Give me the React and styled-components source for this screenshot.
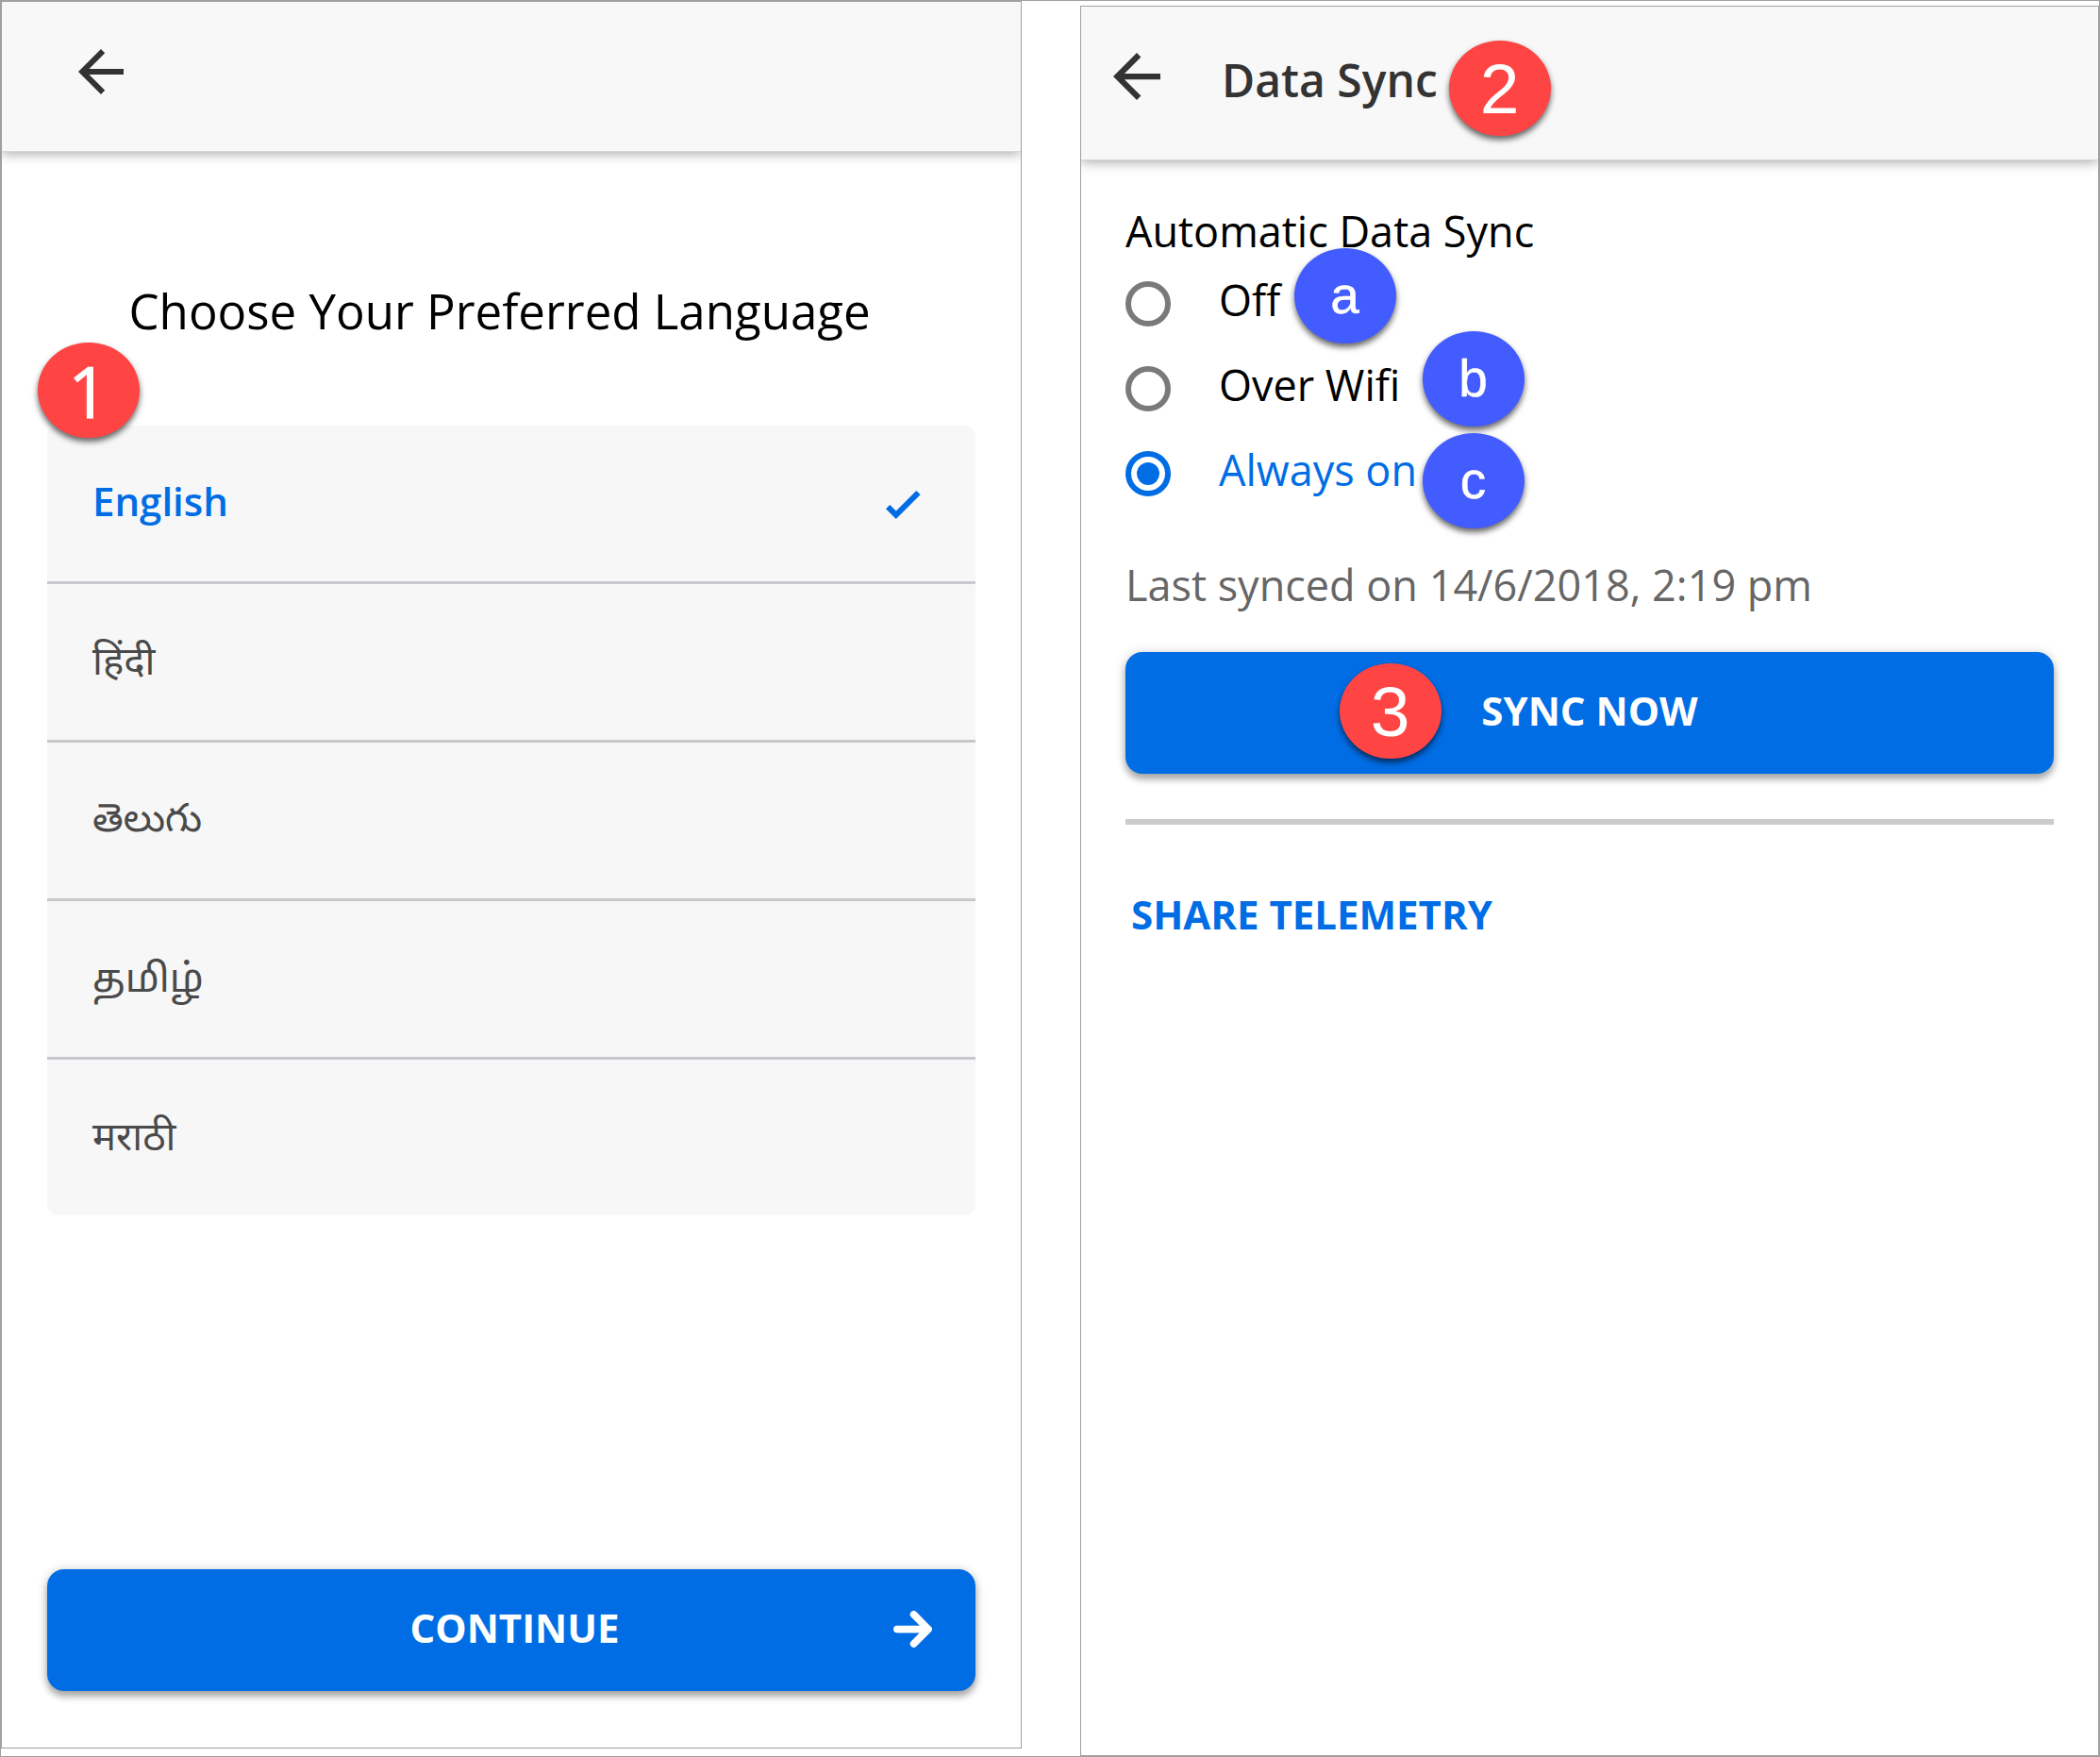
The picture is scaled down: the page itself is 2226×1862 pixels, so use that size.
import React, { useState } from "react";
import styled, { createGlobalStyle } from "styled-components";

const BLUE = "#006de5";
const FRAME = "#a0a0a0";

const GlobalStyle = createGlobalStyle`
  *, *::before, *::after { box-sizing: border-box; }
  body { margin: 0; background: #fff; }
  button { font: inherit; margin: 0; border: 0; padding: 0; background: none; cursor: pointer; }
`;

const Board = styled.main`
  position: relative;
  display: flex;
  justify-content: space-between;
  width: 2226px;
  height: 1862px;
  border: 1px solid ${FRAME};
  background: #fff;
  font-family: "Open Sans", "Noto Sans", sans-serif;
  color: #000;
`;

const Screen = styled.section`
  display: flex;
  flex-direction: column;
  width: ${(p) => p.$width}px;
  height: ${(p) => p.$height}px;
  margin-top: ${(p) => p.$top || 0}px;
  border: 1px solid ${FRAME};
  background: #fff;
`;

const Header = styled.header`
  display: flex;
  flex: none;
  align-items: flex-start;
  height: ${(p) => p.$height}px;
  padding: ${(p) => p.$pad};
  background: #f8f8f8;
  box-shadow: 0 1px 0 #d6d6d6, 0 3px 12px rgba(0, 0, 0, 0.34);
  clip-path: inset(0 0 -20px 0);
`;

const BackButton = styled.button`
  display: flex;
  flex: none;
`;

const HeaderTitle = styled.h1`
  margin: -4px 0 0 65px;
  font-size: 48px;
  line-height: 66px;
  font-weight: 600;
  color: #333;
`;

const LanguageBody = styled.div`
  display: flex;
  flex: 1;
  flex-direction: column;
  padding: 134px 48px 60px;
`;

const Prompt = styled.h2`
  margin: 0 0 87px;
  padding-left: 86.5px;
  font-size: 51px;
  line-height: 70px;
  font-weight: 400;
  white-space: nowrap;
`;

const LanguageList = styled.ul`
  margin: 0;
  padding: 0;
  list-style: none;
  border-radius: 12px;
  background: #f7f7f7;
  overflow: hidden;
`;

const LanguageRow = styled.li`
  display: flex;
  align-items: center;
  justify-content: space-between;
  height: 168px;
  padding: 0 58px ${(p) => 6 + (p.$raise || 0)}px 48px;
  border-bottom: 3px solid #c8c7cc;
  font-family: "Open Sans", "Noto Sans", "Noto Sans Tamil", "Noto Sans Telugu", sans-serif;
  font-size: 42px;
  line-height: 58px;
  font-weight: ${(p) => (p.$active ? 600 : 400)};
  color: ${(p) => (p.$active ? BLUE : "#4a4a4a")};
  cursor: pointer;

  &:last-child {
    height: 165px;
    border-bottom: 0;
  }
`;

const CheckSvg = styled.svg`
  margin-top: 9px;
`;

const PrimaryButton = styled.button`
  display: grid;
  grid-template-columns: 1fr auto 1fr;
  align-items: center;
  flex: none;
  width: 984px;
  height: 129px;
  padding: 0 46px 5px;
  margin-top: ${(p) => p.$top};
  border-radius: 18px;
  background: ${BLUE};
  color: #fff;
  font-size: 42px;
  line-height: 58px;
  font-weight: 700;
  box-shadow: 0 6px 7px rgba(0, 0, 0, 0.27), 0 1px 12px rgba(0, 0, 0, 0.2);

  span {
    grid-column: 2;
    margin-left: ${(p) => p.$shift || 0}px;
  }

  svg {
    justify-self: end;
    margin-top: 2px;
  }
`;

const SyncBody = styled.div`
  display: flex;
  flex-direction: column;
  align-items: flex-start;
  padding: 45px 47px 0;
  font-size: 45px;
  line-height: 62px;
`;

const SectionLabel = styled.h2`
  margin: 0 0 1px;
  font: inherit;
`;

const Option = styled.label`
  display: flex;
  align-items: center;
  gap: 51px;
  height: 90px;
  color: ${(p) => (p.$active ? BLUE : "#000")};
  cursor: pointer;

  span { margin-bottom: 8px; }
`;

const Radio = styled.i`
  display: grid;
  place-items: center;
  width: 48px;
  height: 48px;
  border: 6px solid ${(p) => (p.$active ? BLUE : "#7a7a7a")};
  border-radius: 50%;

  &::after {
    content: "";
    width: 24px;
    height: 24px;
    border-radius: 50%;
    background: ${(p) => (p.$active ? BLUE : "transparent")};
  }
`;

const LastSynced = styled.p`
  margin: 42px 0 0;
  color: #666;
`;

const Divider = styled.hr`
  width: 984px;
  height: 6px;
  margin: 48px 0 0;
  border: 0;
  background: #ccc;
`;

const TextButton = styled.button`
  margin: 66px 0 0 6px;
  color: ${BLUE};
  font-size: 42px;
  line-height: 58px;
  font-weight: 700;
`;

const Callout = styled.div`
  position: absolute;
  left: ${(p) => p.$x}px;
  top: ${(p) => p.$y}px;
  display: flex;
  justify-content: center;
  width: 108px;
  height: 101px;
  border-radius: 50%;
  background: ${(p) => (p.$letter ? "#435cff" : "#ff4444")};
  box-shadow: 0 4px 6px rgba(0, 0, 0, 0.6);
  color: #fff;
  font-family: ${(p) => p.$font || '"Liberation Sans", Arial, sans-serif'};
  font-size: ${(p) => (p.$letter ? 55 : 75)}px;
  line-height: ${(p) => (p.$letter ? 101 : 102)}px;
  -webkit-text-stroke: ${(p) => p.$stroke || 0}px #fff;
`;

function BackArrow({ width, height }) {
  return (
    <svg width={width} height={height} viewBox="4 4 16 16" preserveAspectRatio="none" fill="#333">
      <path d="M20 11H7.83l5.58-5.59L12 4l-8 8 8 8 1.41-1.41L7.83 13H20z" />
    </svg>
  );
}

function Check() {
  return (
    <CheckSvg width="37" height="30" viewBox="0 0 37 30" fill={BLUE}>
      <path d="M0 19.3 4.3 15l6.5 6.5L32.3 0l4.3 4.3L10.8 30z" />
    </CheckSvg>
  );
}

function ForwardArrow() {
  return (
    <svg
      width="41"
      height="39"
      viewBox="0 0 41 39"
      fill="none"
      stroke="#fff"
      strokeWidth="7.7"
      strokeLinecap="round"
      strokeLinejoin="round"
    >
      <path d="M3.9 19.6H36M21.6 4l15.5 15.6L21.6 35" />
    </svg>
  );
}

const LANGUAGES = [
  { name: "English" },
  { name: "हिंदी" },
  { name: "తెలుగు", raise: 4 },
  { name: "தமிழ்" },
  { name: "मराठी" },
];
const SYNC_MODES = ["Off", "Over Wifi", "Always on"];

const CALLOUTS = [
  { text: "1", x: 38.5, y: 362, font: '"Open Sans", sans-serif', stroke: 1 },
  { text: "2", x: 1534.5, y: 42 },
  { text: "3", x: 1418.5, y: 702 },
  { text: "a", x: 1370.5, y: 262, letter: true, stroke: 0.5 },
  { text: "b", x: 1506.5, y: 350, letter: true, stroke: 0.5 },
  { text: "c", x: 1506.5, y: 458, letter: true, stroke: 0.5 },
];

export default function App() {
  const [language, setLanguage] = useState("English");
  const [mode, setMode] = useState("Always on");

  return (
    <>
      <GlobalStyle />
      <Board>
        <Screen $width={1082} $height={1852}>
          <Header $height={158} $pad="50px 0 0 81px">
            <BackButton aria-label="Back">
              <BackArrow width={48} height={48} />
            </BackButton>
          </Header>
          <LanguageBody>
            <Prompt>Choose Your Preferred Language</Prompt>
            <LanguageList>
              {LANGUAGES.map(({ name, raise }) => (
                <LanguageRow
                  key={name}
                  $active={name === language}
                  $raise={raise}
                  onClick={() => setLanguage(name)}
                >
                  {name}
                  {name === language && <Check />}
                </LanguageRow>
              ))}
            </LanguageList>
            <PrimaryButton $top="auto" $shift={7}>
              <span>CONTINUE</span>
              <ForwardArrow />
            </PrimaryButton>
          </LanguageBody>
        </Screen>

        <Screen $width={1080} $height={1855} $top={5}>
          <Header $height={162} $pad="49px 0 0 34px">
            <BackButton aria-label="Back">
              <BackArrow width={50} height={50} />
            </BackButton>
            <HeaderTitle>Data Sync</HeaderTitle>
          </Header>
          <SyncBody>
            <SectionLabel>Automatic Data Sync</SectionLabel>
            {SYNC_MODES.map((name) => (
              <Option key={name} $active={name === mode} onClick={() => setMode(name)}>
                <Radio $active={name === mode} />
                <span>{name}</span>
              </Option>
            ))}
            <LastSynced>Last synced on 14/6/2018, 2:19 pm</LastSynced>
            <PrimaryButton $top="40px">
              <span>SYNC NOW</span>
            </PrimaryButton>
            <Divider />
            <TextButton>SHARE TELEMETRY</TextButton>
          </SyncBody>
        </Screen>

        {CALLOUTS.map((c) => (
          <Callout key={c.text} $x={c.x} $y={c.y} $letter={c.letter} $font={c.font} $stroke={c.stroke}>
            {c.text}
          </Callout>
        ))}
      </Board>
    </>
  );
}
